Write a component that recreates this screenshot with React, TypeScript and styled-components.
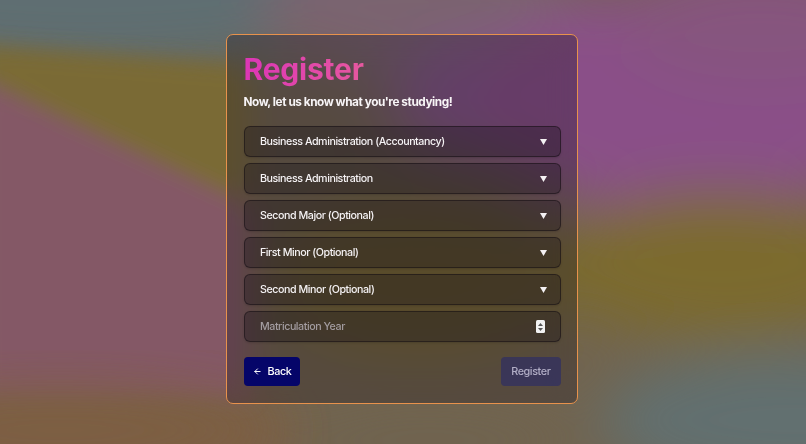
import React from "react";
import styled, { createGlobalStyle } from "styled-components";
import { ArrowLeft } from "lucide-react";

const Global = createGlobalStyle`
  html, body { margin: 0; padding: 0; height: 100%; }
  body { font-family: Inter, "Noto Sans", sans-serif; background: #6f6452; overflow: hidden; }
  * { box-sizing: border-box; }
`;

const Page = styled.div`
  position: relative;
  width: 100vw;
  height: 100vh;
  display: flex;
  justify-content: center;
  align-items: flex-start;
  padding-top: 34px;
  padding-right: 2px;
`;

const Backdrop = styled.svg`
  position: fixed;
  inset: 0;
  width: 100%;
  height: 100%;
  z-index: 0;
`;

const Card = styled.form`
  position: relative;
  z-index: 1;
  width: 352px;
  border: 1.5px solid #e8924c;
  border-radius: 7px;
  padding: 16px 16.5px 16.5px;
  background: rgba(24, 16, 30, 0.3);
  backdrop-filter: blur(14px);
  display: flex;
  flex-direction: column;
`;

const Title = styled.h1`
  margin: 0;
  font-size: 30px;
  line-height: 36px;
  font-weight: 700;
  letter-spacing: -0.2px;
  background: linear-gradient(90deg, #dc36b6 0%, #e6589f 100%);
  -webkit-background-clip: text;
  background-clip: text;
  color: transparent;
  align-self: flex-start;
`;

const Subtitle = styled.p`
  margin: 6px 0 15px;
  font-size: 11.8px;
  line-height: 18px;
  font-weight: 700;
  letter-spacing: -0.45px;
  color: #f7f4f6;
`;

const Fields = styled.div`
  display: flex;
  flex-direction: column;
  gap: 6px;
`;

const Field = styled.div<{ $placeholder?: boolean }>`
  height: 31px;
  display: flex;
  align-items: center;
  justify-content: space-between;
  padding: 0 13px 0 15.5px;
  border: 1px solid rgba(20, 14, 20, 0.55);
  border-radius: 6px;
  background: rgba(18, 10, 20, 0.3);
  box-shadow: 0 1px 2px rgba(0, 0, 0, 0.15);
  font-size: 10.7px;
  font-weight: 500;
  letter-spacing: -0.45px;
  color: ${(p) => (p.$placeholder ? "#a39ca0" : "#f6f3f5")};
`;

const Label = styled.span`
  white-space: nowrap;
`;

const Caret = styled.svg`
  width: 7px;
  height: 6px;
`;

const Spinner = styled.span`
  width: 9px;
  height: 13px;
  background: #f2f2f2;
  border-radius: 1.5px;
  display: flex;
  flex-direction: column;
  align-items: center;
  justify-content: center;
  gap: 2px;
  margin-right: 2px;
`;

const Tri = styled.svg`
  width: 5px;
  height: 3px;
`;

const Actions = styled.div`
  display: flex;
  justify-content: space-between;
  margin-top: 15px;
`;

const Button = styled.button<{ $primary?: boolean }>`
  height: 29px;
  border: none;
  border-radius: 4px;
  font-family: inherit;
  font-size: 10.8px;
  font-weight: 500;
  letter-spacing: -0.4px;
  display: flex;
  align-items: center;
  gap: 6px;
  padding: ${(p) => (p.$primary ? "0 10px" : "0 9px 0 9px")};
  background: ${(p) => (p.$primary ? "rgba(34, 36, 110, 0.55)" : "#050569")};
  color: ${(p) => (p.$primary ? "#b2aec6" : "#ffffff")};
`;

const selects = [
  "Business Administration (Accountancy)",
  "Business Administration",
  "Second Major (Optional)",
  "First Minor (Optional)",
  "Second Minor (Optional)",
];

export default function App() {
  return (
    <>
      <Global />
      <Page>
        <Backdrop viewBox="0 0 806 444" preserveAspectRatio="none">
          <defs>
            <filter id="b" x="-50%" y="-50%" width="200%" height="200%">
              <feGaussianBlur stdDeviation="28" />
            </filter>
            <filter id="s" x="-50%" y="-50%" width="200%" height="200%">
              <feGaussianBlur stdDeviation="10" />
            </filter>
          </defs>
          <rect width="806" height="444" fill="#71644f" />
          <g filter="url(#b)">
            <ellipse cx="420" cy="280" rx="150" ry="80" fill="#766632" />
            <ellipse cx="90" cy="-10" rx="330" ry="80" fill="#5e6e72" />
            <ellipse cx="420" cy="10" rx="160" ry="70" fill="#7a6470" />
            <ellipse cx="500" cy="100" rx="110" ry="60" fill="#84528a" />
            <ellipse cx="690" cy="100" rx="220" ry="115" fill="#8a4f88" />
            <ellipse cx="760" cy="20" rx="140" ry="60" fill="#86547e" />
            <ellipse cx="720" cy="265" rx="170" ry="75" fill="#7c6a2e" />
            <ellipse cx="800" cy="420" rx="200" ry="70" fill="#627070" />
            <ellipse cx="60" cy="440" rx="260" ry="60" fill="#7c5f44" />
            <ellipse cx="430" cy="440" rx="150" ry="40" fill="#706450" />
          </g>
          <g filter="url(#s)">
            <polygon points="-20,45 250,65 250,210 -20,78" fill="#7a6b35" />
            <polygon points="-20,80 250,205 250,400 -20,400" fill="#845966" />
          </g>
          <g filter="url(#b)">
            <ellipse cx="60" cy="430" rx="220" ry="40" fill="#7d5f43" />
          </g>
        </Backdrop>
        <Card onSubmit={(e) => e.preventDefault()}>
          <Title>Register</Title>
          <Subtitle>Now, let us know what you're studying!</Subtitle>
          <Fields>
            {selects.map((s) => (
              <Field key={s}>
                <Label>{s}</Label>
                <Caret viewBox="0 0 7 6">
                  <polygon points="0,0 7,0 3.5,6" fill="#f4f1f3" />
                </Caret>
              </Field>
            ))}
            <Field $placeholder>
              <Label>Matriculation Year</Label>
              <Spinner>
                <Tri viewBox="0 0 5 3">
                  <polygon points="2.5,0 5,3 0,3" fill="#555" />
                </Tri>
                <Tri viewBox="0 0 5 3">
                  <polygon points="0,0 5,0 2.5,3" fill="#555" />
                </Tri>
              </Spinner>
            </Field>
          </Fields>
          <Actions>
            <Button type="button">
              <ArrowLeft size={9} strokeWidth={2.6} />
              Back
            </Button>
            <Button type="submit" $primary>
              Register
            </Button>
          </Actions>
        </Card>
      </Page>
    </>
  );
}
